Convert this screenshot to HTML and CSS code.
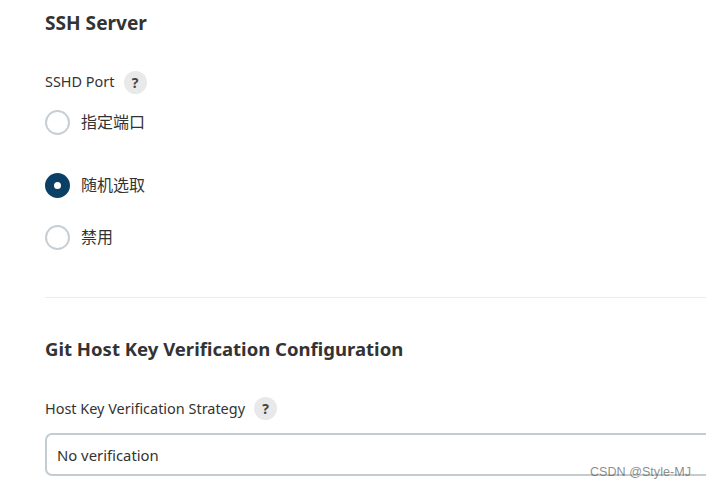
FILE: index.html
```html
<!DOCTYPE html>
<html lang="zh">
<head>
<meta charset="utf-8">
<title>SSH Server</title>
<link rel="stylesheet" href="styles.css">
</head>
<body>
<main class="page">
  <section class="section section-ssh">
    <h2 class="title title-ssh">SSH Server</h2>
    <div class="label-row label-row-ssh">
      <span class="label">SSHD Port</span>
      <span class="help">?</span>
    </div>
    <div class="radio-row row-first"><span class="radio"></span><span class="radio-text">指定端口</span></div>
    <div class="radio-row row-second"><span class="radio radio-on"></span><span class="radio-text">随机选取</span></div>
    <div class="radio-row row-third"><span class="radio"></span><span class="radio-text">禁用</span></div>
  </section>
  <hr class="divider">
  <section class="section">
    <h2 class="title">Git Host Key Verification Configuration</h2>
    <div class="label-row label-row-git">
      <span class="label">Host Key Verification Strategy</span>
      <span class="help help-git">?</span>
    </div>
    <div class="select">No verification</div>
  </section>
</main>
<div class="watermark">CSDN @Style-MJ</div>
</body>
</html>
```
FILE: styles.css
```css
html, body {
  margin: 0;
  padding: 0;
  width: 706px;
  height: 489px;
  overflow: hidden;
  background: #fff;
}
body {
  position: relative;
  font-family: "Noto Sans", "Noto Sans CJK SC", sans-serif;
  color: #333;
}
.page {
  padding: 10px 0 0 45px;
}
.title {
  margin: 0;
  font-size: 18.55px;
  line-height: 26px;
  font-weight: 700;
  color: #333;
}
.title-ssh {
  font-size: 19.1px;
}
.label-row {
  display: flex;
  align-items: center;
  gap: 9px;
  height: 24px;
}
.label-row-ssh { margin-top: 34px; }
.label-row-git { margin-top: 35px; }
.label {
  font-size: 14.45px;
  line-height: 24px;
  color: #333;
}
.help {
  width: 23px;
  height: 23px;
  border-radius: 50%;
  background: #e9e9e9;
  font-size: 14px;
  font-weight: 700;
  line-height: 23px;
  text-align: center;
  color: #444;
}
.help-git {
  margin-bottom: 2px;
}
.radio-row {
  display: flex;
  align-items: center;
  gap: 11px;
  height: 25px;
}
.row-first { margin-top: 16px; }
.row-second { margin-top: 38px; }
.row-third { margin-top: 27px; }
.radio {
  box-sizing: border-box;
  width: 25px;
  height: 25px;
  border-radius: 50%;
  border: 2px solid #c6cfd5;
  background: #fff;
}
.radio-on {
  border: 9px solid #0b3f66;
}
.radio-text {
  padding-bottom: 4px;
  font-size: 16px;
  color: #333;
}
.divider {
  height: 1px;
  border: 0;
  margin: 47px 0 38px;
  background: #ececee;
}
.select {
  box-sizing: border-box;
  height: 43px;
  width: 700px;
  margin-top: 12px;
  padding-left: 10px;
  border: 2px solid #c3cdd1;
  border-radius: 7px;
  font-size: 14.85px;
  line-height: 40px;
  color: #333;
}
.watermark {
  position: absolute;
  left: 590px;
  top: 464px;
  font-family: "Liberation Sans", sans-serif;
  font-size: 12.6px;
  line-height: 16px;
  color: rgba(90, 90, 90, 0.7);
}
```
